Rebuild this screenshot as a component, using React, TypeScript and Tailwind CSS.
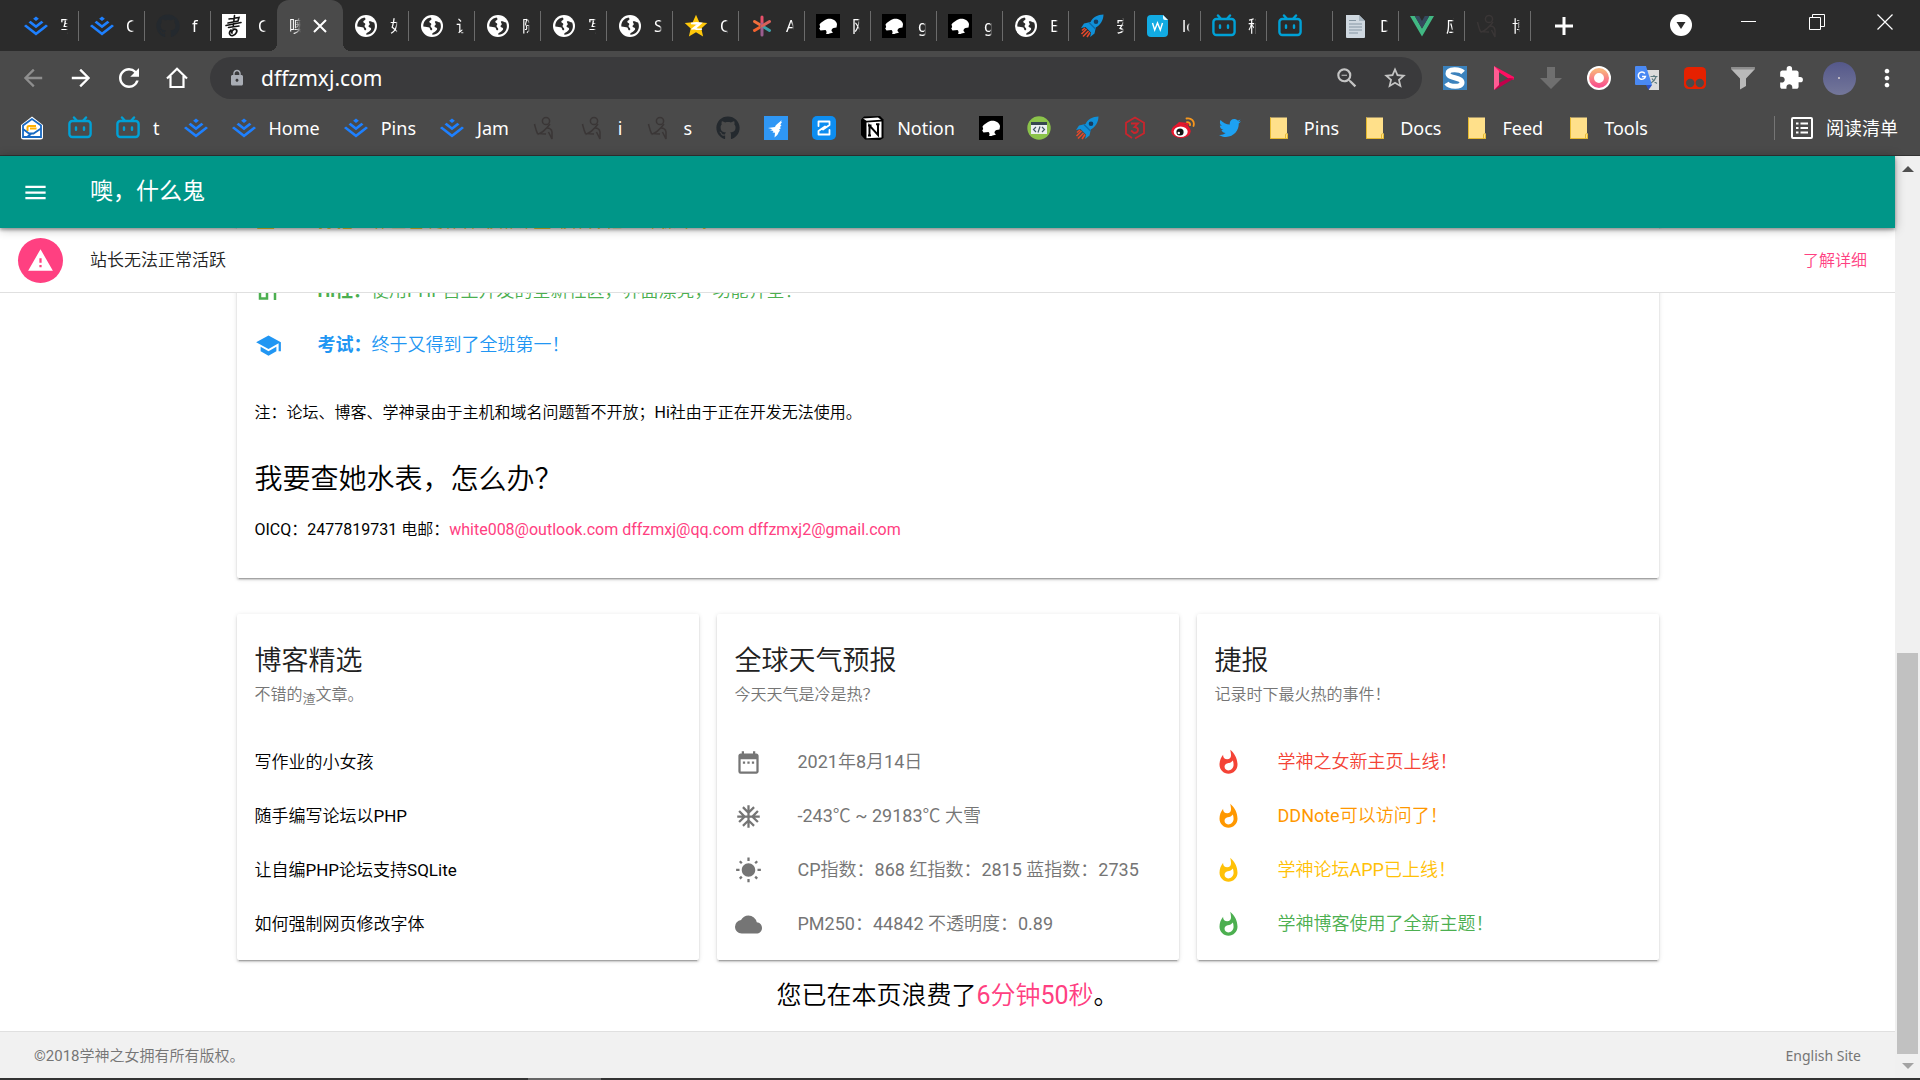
import type { ReactNode } from "react";
import {
  MdAcUnit,
  MdArrowBack,
  MdArrowForward,
  MdCloud,
  MdDateRange,
  MdExtension,
  MdForum,
  MdLock,
  MdMenu,
  MdMoreVert,
  MdRefresh,
  MdSchool,
  MdStarBorder,
  MdWarning,
  MdWbSunny,
  MdWhatshot,
  MdZoomOut,
} from "react-icons/md";
import { FaGithub, FaTwitter } from "react-icons/fa";
import { SiJuejin } from "react-icons/si";

/* ---------- browser icons ---------- */

const Juejin = () => <SiJuejin className="size-6 text-[#1e80ff]" />;

const Bili = () => (
  <svg viewBox="0 0 24 24" className="size-6" fill="none" stroke="#00a1d6" strokeWidth="2.4" strokeLinecap="round">
    <path d="M6 1.5 8.6 4.6M18 1.5 15.4 4.6" />
    <rect x="1.4" y="5" width="21.2" height="16" rx="3" />
    <path d="M8 11.4v2.4M16 11.4v2.4" />
  </svg>
);

const Globe = () => (
  <svg viewBox="0 0 24 24" className="size-6">
    <circle cx="12" cy="12" r="11" fill="#fff" />
    <path
      d="M10.5 3.4c-4.4.8-7.4 4.4-7.2 9 2.6.6 4.8.4 6 1.2.8.6.5 1.8 1.2 2.4.9.7 2 .2 1.7-1.2-.3-1.3-1.6-1.3-1.7-2.7 0-.9 1-1.3.8-2.2-.3-1-1.9-.9-2-2.1-.1-1.3 1.8-1.5 2.2-2.5.2-.6-.3-1.3-1-1.900ZM15 7.200c-.6 1.300.8 1.800.8 2.900 0 1.200-1.500 1.400-1.300 2.500.2 1.100 2.200.7 2.600 2 .3 1.100-.7 1.700-1.600 2.600-1.400 1.400-2.600 1.300-3.300 2.600-.2.400 0 .8.400 1 4.700-.200 8.300-3.900 8.300-8.600 0-1.300-.3-2.500-.8-3.600-1.700-.9-3.600-1.600-5.100-1.400Z"
      fill="#2b2b2b"
    />
  </svg>
);

const Rocket = () => (
  <svg viewBox="0 0 24 24" className="size-6">
    <path d="M23.5.5c-6 .2-10.5 2.600-13 7.500L4 9.500 1 14l4.500-1 5.500 5.500-.8 4.500 4.300-3.500 1.300-6C20.500 11 23.300 6.500 23.500.5Z" fill="#1090d8" />
    <circle cx="16" cy="7.8" r="2.3" fill="#173c5e" />
    <path d="M9 8.500 15.500 15" stroke="#0c6aa8" strokeWidth="1.2" />
    <path d="M6.500 15 1.500 20M8.500 17 3 22.500M5 14l-3 2.500M10 18.500 7 23" stroke="#e2492c" strokeWidth="1.6" />
  </svg>
);

const Horse = () => (
  <svg viewBox="0 0 24 24" className="size-6">
    <path d="M0 0h24v24H0z" fill="#000" />
    <path
      d="M3.500 10.500C5 8 7 7.500 9 6c3-2 6.500-1.500 9 0 1.500 1 3 2.500 3 4.500l-.5 3-3 .5c-1.500.5-2 1.500-2 3l1.500 1.500c-2 1-3 .5-4.500 1.500H10c1-1.500.5-3-.5-4L4.500 16.500l-1.300-2 1-1.500Z"
      fill="#fff"
    />
  </svg>
);

const Star = () => (
  <svg viewBox="0 0 24 24" className="size-6">
    <path d="m12 .8 3.300 7.500 8 .8-6 5.400 1.800 8-7.100-4.200-7.100 4.200 1.800-8-6-5.400 8-.8Z" fill="#ffc80a" />
    <path d="M7 9.500c4-.8 7-.8 10-.2l-6.500 5.500c2.500.6 5 .6 7.500.2M7 9.500c2.500 0 5 .2 7 .8L7.500 15.500" fill="none" stroke="#fff" strokeWidth="1.6" />
  </svg>
);

const Asterisk = () => (
  <svg viewBox="0 0 24 24" className="size-6" strokeWidth="3" strokeLinecap="round">
    <path d="M12 9V3" stroke="#e8506a" />
    <path d="M9.500 10.500 4.500 7.500" stroke="#f26f3c" />
    <path d="m9.500 13.500-5 3" stroke="#f2622f" />
    <path d="M12 10v11" stroke="#9a5d8e" />
    <path d="m13 12.500 6.500 4" stroke="#3f9ea6" />
    <path d="m12 12 7.500-4.500" stroke="#d9605a" />
  </svg>
);

const Stroke = () => (
  <svg viewBox="0 0 24 24" className="size-6" fill="none" stroke="#3a3636" strokeWidth="1.5">
    <circle cx="13" cy="5" r="3.6" />
    <path d="M1.500 8c1 4 1.500 7 3 9.500L13 18M17 8C14 12 9 17 4.500 18.500M14 12c3 0 4.500 1 5 4v7l-3.500-7" />
  </svg>
);

const Calligraphy = () => (
  <svg viewBox="0 0 24 24" className="size-6" fill="none" stroke="#111" strokeLinecap="round">
    <path d="M0 0h24v24H0z" fill="#fff" stroke="none" />
    <path d="M12.500 1.500 11 14M7 5l10-1.500-1 3.500L6 9M4 11.500l15-3M6.500 13.500 17 12" strokeWidth="1.6" />
    <path d="M9 16c-3 3-1 6.500 2 5.500s5-4.500 3-6-5 2-4 3.500" strokeWidth="1.7" />
  </svg>
);

const WDoc = () => (
  <svg viewBox="0 0 24 24" className="size-6">
    <path d="M5 1h12l5 5v13a4 4 0 0 1-4 4H5a4 4 0 0 1-4-4V5a4 4 0 0 1 4-4Z" fill="#12abe3" />
    <path d="m17 1 5 5h-3a2 2 0 0 1-2-2Z" fill="#eafaff" />
    <path d="m6.500 9 2.200 7 2.800-7 2.800 7 2.200-7" fill="none" stroke="#fff" strokeWidth="1.4" />
  </svg>
);

const Paper = () => (
  <svg viewBox="0 0 24 24" className="size-6">
    <path d="M2 1h13l6 6v16a1 1 0 0 1-1 1H3a1 1 0 0 1-1-1Z" fill="#cfd8e0" />
    <path d="m15 1 6 6h-6Z" fill="#a9b7c2" />
    <path d="M5 6.500h7M5 10h13M5 13h13M5 16h13M5 19h9" stroke="#8596a3" strokeWidth="1.1" />
  </svg>
);

const Vue = () => (
  <svg viewBox="0 0 24 24" className="size-6">
    <path d="M0 2h4.800L12 14.500 19.200 2H24L12 22.500Z" fill="#41b883" />
    <path d="M4.800 2h4.400L12 6.900 14.800 2h4.400L12 14.500Z" fill="#35495e" />
  </svg>
);

const Mail = () => (
  <svg viewBox="0 0 24 24" className="size-6">
    <path d="M12 .5 23 9v12a2.500 2.500 0 0 1-2.500 2.500h-17A2.500 2.500 0 0 1 1 21V9Z" fill="#fff" />
    <path d="M12 3 3 9.500V21h18V9.500Z" fill="none" stroke="#1769c2" strokeWidth="1.8" />
    <path d="M7.500 15v-3.500a1.500 1.500 0 0 1 1.500-1.500h7M16.500 12.500h-6.500" fill="none" stroke="#ffb100" strokeWidth="2" />
    <path d="m3 13 6 4.500h4.500l7.500-5M7 21l4-3" fill="none" stroke="#1769c2" strokeWidth="1.8" />
  </svg>
);

const Bird = () => (
  <svg viewBox="0 0 24 24" className="size-6">
    <path d="M0 0h24v24H0z" fill="#2f97f5" />
    <path
      d="M18.500 2.500C17.500 6 12 7.500 11 11L4 12l4.500 1.200-2.500 1 3.500.8-1 1.500 2.500.3-.5 4.700c2-1.500 3.500-3 4-5l1.500-2-1-.8 2-1.700-1.200-.8 1.700-2-1.200-.7 1.700-2.500-1-.5Z"
      fill="#fff"
    />
  </svg>
);

const ZApp = () => (
  <svg viewBox="0 0 24 24" className="size-6" fill="none" stroke="#fff" strokeWidth="1.8" strokeLinejoin="round" strokeLinecap="round">
    <rect width="24" height="24" rx="5" fill="#0d8df0" stroke="none" />
    <path d="M6.500 10V5.500h11v3.500L11 13.500M17.500 14v4.500h-11V15L13 10.500" />
  </svg>
);

const Notion = () => (
  <svg viewBox="0 0 24 24" className="size-6">
    <path d="M1 3.500 4 .5 20 0l3.500 3.500V22L20 24 5 23.500 1 19Z" fill="#000" />
    <path d="m3 2.500 15-1 3 2.200L6.500 4.800ZM6.500 6.500l15-1v16l-15 .8Z" fill="#fff" />
    <path d="M9.500 19.500v-10l8.500 9.500V8M8 9.500h3.500M8 19.500h3M16 8.200h3.500" stroke="#000" strokeWidth="2" fill="none" />
  </svg>
);

const CodeBadge = () => (
  <svg viewBox="0 0 24 24" className="size-6">
    <circle cx="12" cy="12" r="11.7" fill="#8bc34a" />
    <path d="M4 6h16v12H4z" fill="#eceff1" />
    <path d="M4 6h16v3H4z" fill="#37474f" />
    <path d="m9 11-2.500 2.500L9 16m6-5 2.500 2.500L15 16m-2-5.500-2 6" fill="none" stroke="#455a64" strokeWidth="1.2" />
  </svg>
);

const RedHex = () => (
  <svg viewBox="0 0 24 24" className="size-6" fill="none" stroke="#c9252d" strokeWidth="1.8">
    <path d="M9 22 3 17.800V6.700l9-5.200 9 5.200v10.600l-9 5.200" />
    <path d="M8 7.500h7L11.500 11c5 .5 4.500 6-.5 6L8 14.500" />
  </svg>
);

const Weibo = () => (
  <svg viewBox="0 0 24 24" className="size-6">
    <ellipse cx="10" cy="15" rx="9.8" ry="7.2" fill="#e6162d" />
    <path d="M8 6 4 10l10-2 3 2 1-3Z" fill="#e6162d" />
    <ellipse cx="9.7" cy="15.8" rx="7" ry="5.3" fill="#fff" />
    <circle cx="9" cy="16" r="3.6" fill="#111" />
    <circle cx="7.8" cy="17" r="1.2" fill="#fff" />
    <path d="M15.500 2.500c5-1 8.500 3 7 7.500M16 6.200c2-.3 3.500 1 3 3" fill="none" stroke="#f7971d" strokeWidth="1.8" strokeLinecap="round" />
  </svg>
);

const Folder = () => (
  <svg viewBox="-3 -1 24 24" className="size-6">
    <path d="M0 .5h17V16l1 1v4.500H0Z" fill="#ffe08a" />
    <path d="M.5 21.500h15V17.500c0-1 2-1 2 0v4h-2M.5 21.500V.5" fill="none" stroke="#e5b92f" />
  </svg>
);

const ReadingList = () => (
  <svg viewBox="0 0 22 22" className="size-[22px]" fill="none" stroke="#fff" strokeWidth="2">
    <rect x="1" y="1" width="20" height="20" rx="1" />
    <path d="M5 6.500h2.500M9.500 6.500H17M5 11h2.500M9.500 11H17M5 15.500h2.500M9.500 15.500H17" />
  </svg>
);

const Home = () => (
  <svg viewBox="0 0 24 24" className="size-6" fill="none" stroke="#fff" strokeWidth="2.2">
    <path d="M2 12.500 12 2.800l10 9.700M5.500 10v11h13V10" />
  </svg>
);

const extensions: { name: string; icon: ReactNode }[] = [
  {
    name: "S",
    icon: (
      <svg viewBox="0 0 24 24" className="size-6">
        <path d="M0 0h24v24H0z" fill="#3b82bd" />
        <path d="M20 6.500C17 3 5 2.500 5 7.500S19 11 19 16.500 6 21 3.500 17" fill="none" stroke="#fff" strokeWidth="5" />
      </svg>
    ),
  },
  {
    name: "Play",
    icon: (
      <svg viewBox="0 0 24 24" className="size-6">
        <path d="m3 0 20 11v2.500h-4L6 5Z" fill="#ff0f62" />
        <path d="M23 12.500 4 24v-5l14-7Z" fill="#c2004b" />
        <path d="m3 0 5 5v14l-5 5Z" fill="#ff5c93" />
      </svg>
    ),
  },
  {
    name: "Download",
    icon: (
      <svg viewBox="0 0 24 24" className="size-6">
        <path d="M8 1h8v11h7L12 23 1 12h7Z" fill="#6f6f6f" />
      </svg>
    ),
  },
  {
    name: "Ring",
    icon: (
      <svg viewBox="0 0 24 24" className="size-6">
        <defs>
          <linearGradient id="ring" x1="0" y1="0" x2="0" y2="1">
            <stop offset="0" stopColor="#f9b27c" />
            <stop offset="1" stopColor="#f8558c" />
          </linearGradient>
        </defs>
        <circle cx="12" cy="12" r="12" fill="#fff" />
        <circle cx="12" cy="12" r="7.5" fill="none" stroke="url(#ring)" strokeWidth="5" />
      </svg>
    ),
  },
  {
    name: "Translate",
    icon: (
      <svg viewBox="0 0 24 24" className="size-6">
        <path d="M11 4h13v20H14Z" fill="#dcdcdc" />
        <path d="M15.500 10.500h7M19 9v1.500M21 11c-1 3-3 5-5 6M17 12.500c1 2 3 4 5 5" stroke="#5c7a80" strokeWidth="1.2" fill="none" />
        <path d="M11 19h6l-3.500 5Z" fill="#2b50c8" />
        <path d="M1 0h10l6 19H1a1 1 0 0 1-1-1V1a1 1 0 0 1 1-1Z" fill="#4a89f3" />
        <path d="M9.800 7.500a3.600 3.600 0 1 0 .6 3H7" fill="none" stroke="#fff" strokeWidth="1.5" />
      </svg>
    ),
  },
  {
    name: "Monkey",
    icon: (
      <svg viewBox="0 0 24 24" className="size-6">
        <rect x="1" y="1" width="22" height="22" rx="4.5" fill="#e62100" />
        <circle cx="7.2" cy="17" r="4.2" fill="#4a4a4a" />
        <circle cx="16.8" cy="17" r="4.2" fill="#4a4a4a" />
      </svg>
    ),
  },
  {
    name: "Filter",
    icon: (
      <svg viewBox="0 0 24 24" className="size-6">
        <path d="M.5 1h23v2.500l-8.500 9V20l-6 3.500v-11l-8.500-9Z" fill="#b9b9b9" />
        <path d="M.5 1h23v2.500H.5Z" fill="#8d8d8d" />
      </svg>
    ),
  },
  { name: "Extensions", icon: <MdExtension className="size-[26px] text-white" /> },
  {
    name: "Profile",
    icon: (
      <span className="flex size-[33px] items-center justify-center rounded-full bg-linear-to-b from-[#55588a] to-[#74779a]">
        <span className="size-[2px] rounded-full bg-[#d8cfd0]" />
      </span>
    ),
  },
  { name: "Menu", icon: <MdMoreVert className="size-7 text-white" /> },
];

const Hub = () => <FaGithub className="size-6 text-[#24292e]" />;

const tabs: { icon?: ReactNode; text: string; active?: boolean }[] = [
  { icon: <Juejin />, text: "写" },
  { icon: <Juejin />, text: "C" },
  { icon: <Hub />, text: "f" },
  { icon: <Calligraphy />, text: "C" },
  { text: "噢，", active: true },
  { icon: <Globe />, text: "如" },
  { icon: <Globe />, text: "让" },
  { icon: <Globe />, text: "随" },
  { icon: <Globe />, text: "写" },
  { icon: <Globe />, text: "S" },
  { icon: <Star />, text: "Q" },
  { icon: <Asterisk />, text: "A" },
  { icon: <Horse />, text: "网" },
  { icon: <Horse />, text: "g" },
  { icon: <Horse />, text: "g" },
  { icon: <Globe />, text: "E" },
  { icon: <Rocket />, text: "安" },
  { icon: <WDoc />, text: "lo" },
  { icon: <Bili />, text: "稍" },
  { icon: <Bili />, text: "" },
  { icon: <Paper />, text: "D" },
  { icon: <Vue />, text: "应" },
  { icon: <Stroke />, text: "博" },
];

const bookmarks: { icon: ReactNode; text?: string }[] = [
  { icon: <Mail /> },
  { icon: <Bili /> },
  { icon: <Bili />, text: "t" },
  { icon: <Juejin /> },
  { icon: <Juejin />, text: "Home" },
  { icon: <Juejin />, text: "Pins" },
  { icon: <Juejin />, text: "Jam" },
  { icon: <Stroke /> },
  { icon: <Stroke />, text: "i" },
  { icon: <Stroke />, text: "s" },
  { icon: <Hub /> },
  { icon: <Bird /> },
  { icon: <ZApp /> },
  { icon: <Notion />, text: "Notion" },
  { icon: <Horse /> },
  { icon: <CodeBadge /> },
  { icon: <Rocket /> },
  { icon: <RedHex /> },
  { icon: <Weibo /> },
  { icon: <FaTwitter className="size-[22px] text-[#1da1f2]" /> },
  { icon: <Folder />, text: "Pins" },
  { icon: <Folder />, text: "Docs" },
  { icon: <Folder />, text: "Feed" },
  { icon: <Folder />, text: "Tools" },
];

function TabStrip() {
  return (
    <div className="flex h-[51px] bg-[#2b2b2b] pl-[13px]">
      {tabs.map((tab, i) =>
        tab.active ? (
          <div key={i} className="relative flex w-[66px] shrink-0 items-center rounded-t-xl bg-[#4a4a4a] pl-3">
            <span className="absolute right-full bottom-0 size-2 bg-[radial-gradient(circle_at_0_0,#2b2b2b_8px,#4a4a4a_8px)]" />
            <span className="absolute bottom-0 left-full size-2 bg-[radial-gradient(circle_at_100%_0,#2b2b2b_8px,#4a4a4a_8px)]" />
            <span className="w-3 overflow-hidden mask-r-from-50% text-base whitespace-nowrap">{tab.text}</span>
            <button aria-label="Close tab" className="ml-3">
              <svg viewBox="0 0 14 14" className="size-[14px]" stroke="#fff" strokeWidth="2">
                <path d="m1 1 12 12M13 1 1 13" />
              </svg>
            </button>
          </div>
        ) : (
          <div key={i} className="flex w-[66px] shrink-0 items-center pl-[11px]">
            {tab.icon}
            <span className="ml-3 w-2 overflow-hidden mask-r-from-70% text-base whitespace-nowrap">{tab.text}</span>
            <span className={i === 3 ? "hidden" : "ml-auto h-[30px] w-px bg-[#6b6b6b]"} />
          </div>
        ),
      )}
      <button aria-label="New tab" className="ml-6 self-center">
        <svg viewBox="0 0 18 18" className="size-[18px]" stroke="#fff" strokeWidth="3">
          <path d="M9 0v18M0 9h18" />
        </svg>
      </button>
      <div className="ml-auto flex gap-[49px] pr-[27px] text-white">
        <button aria-label="Search tabs" className="mt-[14px] size-[22px]">
          <svg viewBox="0 0 22 22" className="size-[22px]">
            <circle cx="11" cy="11" r="11" fill="#fff" />
            <path d="M6.500 8h9L11 15Z" fill="#2b2b2b" />
          </svg>
        </button>
        <div className="flex h-[43px] items-center gap-[52px]">
          <button aria-label="Minimize">
            <svg viewBox="0 0 16 16" className="size-4" stroke="#fff">
              <path d="M0 7.500h15" />
            </svg>
          </button>
          <button aria-label="Restore">
            <svg viewBox="0 0 16 16" className="size-4" stroke="#fff" fill="none">
              <path d="M.5 3.500h11v12H.5zM3.500 3.500v-3h12v12h-4" />
            </svg>
          </button>
          <button aria-label="Close">
            <svg viewBox="0 0 16 16" className="size-4" stroke="#fff" strokeWidth="1.2">
              <path d="m.5.5 15 15M15.500.5l-15 15" />
            </svg>
          </button>
        </div>
      </div>
    </div>
  );
}

function Toolbar() {
  return (
    <div className="flex h-[54px] items-center">
      <nav className="flex gap-6 pl-[21px]">
        <button aria-label="Back">
          <MdArrowBack className="size-6 scale-115 text-[#8e8e8e]" />
        </button>
        <button aria-label="Forward">
          <MdArrowForward className="size-6 scale-115 text-white" />
        </button>
        <button aria-label="Reload">
          <MdRefresh className="size-6 scale-125 text-white" />
        </button>
        <button aria-label="Home">
          <Home />
        </button>
      </nav>
      <div className="ml-[21px] flex h-[42px] flex-1 items-center rounded-full bg-[#3a3a3c] pr-[14px] pl-[18px]">
        <MdLock className="size-[18px] text-[#a9adb5]" />
        <input
          aria-label="Address"
          defaultValue="dffzmxj.com"
          className="ml-[15px] h-8 flex-1 bg-transparent text-[21px] text-white outline-none"
        />
        <MdZoomOut className="size-[26px] text-[#c4c4c4]" />
        <MdStarBorder className="ml-[22px] size-[26px] text-[#c4c4c4]" />
      </div>
      <div className="ml-[9px] flex pr-[9px]">
        {extensions.map((e) => (
          <button key={e.name} aria-label={e.name} className="flex w-12 items-center justify-center">
            {e.icon}
          </button>
        ))}
      </div>
    </div>
  );
}

function BookmarkBar() {
  return (
    <div className="flex h-[51px] items-center border-b border-[#333] pr-[22px] pb-[5px] pl-5 text-lg">
      <div className="flex gap-6">
        {bookmarks.map((b, i) => (
          <a key={i} href="#" className="flex min-w-6 shrink-0 items-center gap-[13px]">
            {b.icon}
            {b.text}
          </a>
        ))}
      </div>
      <span className="ml-auto h-6 w-px bg-[#757575]" />
      <button className="ml-4 flex items-center gap-[13px]">
        <ReadingList />
        阅读清单
      </button>
    </div>
  );
}

/* ---------- page ---------- */

const cardShadow =
  "rounded-[2px] bg-white shadow-[0_2px_2px_0_rgba(0,0,0,.14),0_3px_1px_-2px_rgba(0,0,0,.2),0_1px_5px_0_rgba(0,0,0,.12)]";

const Community = () => (
  <svg viewBox="0 0 27 27" className="size-[27px]" fill="none" stroke="currentColor" strokeWidth="2.5">
    <path d="M5 5h7v15.500H5zM20 5v17M15 6h6" />
  </svg>
);

function Row({ icon, color, children }: { icon?: ReactNode; color: string; children: ReactNode }) {
  return (
    <li className={`flex h-[54px] items-center gap-9 ${color}`}>
      {icon}
      <span>{children}</span>
    </li>
  );
}

function Card({ title, sub, children }: { title: string; sub: ReactNode; children: ReactNode }) {
  return (
    <section className={`${cardShadow} px-[18px] pt-[29px] pb-[9px]`}>
      <h2 className="text-[27px] leading-9 text-[#212121]">{title}</h2>
      <p className="h-14 pt-1 text-base leading-6 text-[#757575]">{sub}</p>
      <ul className="text-lg">{children}</ul>
    </section>
  );
}

const posts = ["写作业的小女孩", "随手编写论坛以PHP", "让自编PHP论坛支持SQLite", "如何强制网页修改字体"];

const weather = [
  { icon: <MdDateRange className="size-[27px]" />, text: "2021年8月14日" },
  { icon: <MdAcUnit className="size-[27px]" />, text: "-243℃ ~ 29183℃ 大雪" },
  { icon: <MdWbSunny className="size-[27px]" />, text: "CP指数：868 红指数：2815 蓝指数：2735" },
  { icon: <MdCloud className="size-[27px]" />, text: "PM250：44842 不透明度：0.89" },
];

const news = [
  { text: "学神之女新主页上线！", color: "text-[#f44336]" },
  { text: "DDNote可以访问了！", color: "text-[#ff9800]" },
  { text: "学神论坛APP已上线！", color: "text-[#ffc107]" },
  { text: "学神博客使用了全新主题！", color: "text-[#4caf50]" },
];

function Site() {
  return (
    <div className="flex min-w-0 flex-1 flex-col font-['Roboto','Noto_Sans_CJK_SC_DemiLight','Noto_Sans_CJK_SC_Light','Noto_Sans_CJK_SC',sans-serif] text-black">
      <header className="relative z-20 flex h-[72px] shrink-0 items-center bg-[#009688] pl-[22px] text-white shadow-[0_2px_3px_0_rgba(0,0,0,.3),0_1px_10px_0_rgba(0,0,0,.3)]">
        <button aria-label="Menu">
          <MdMenu className="size-[27px]" />
        </button>
        <h1 className="ml-[41px] font-['Roboto','Noto_Sans_CJK_SC',sans-serif] text-[23px]">噢，什么鬼</h1>
      </header>

      <div className="relative flex min-h-0 flex-1 flex-col overflow-hidden">
        <div className="absolute inset-x-0 top-px z-10 flex h-16 items-center border-b border-[#e0e0e0] bg-white pr-7 pl-[18px]">
          <span className="flex size-[45px] items-center justify-center rounded-full bg-[#ff4081] text-white">
            <MdWarning className="size-[27px]" />
          </span>
          <p className="ml-[27px] text-[17px] text-[#212121]">站长无法正常活跃</p>
          <button className="ml-auto text-base text-[#ff4081]">了解详细</button>
        </div>

        <main className="mx-auto w-full max-w-[1458px] px-[18px]">
          <section className={`${cardShadow} -mt-[18px] h-[368px] px-[18px]`}>
            <ul className="text-lg">
              <Row color="text-[#fdd835]" icon={<MdForum className="size-[27px]" />}>
                <b className="font-['Roboto','Noto_Sans_CJK_SC',sans-serif]">论坛：</b>
                使用最新的技术搭建而成的论坛，功能齐全！
              </Row>
              <Row color="text-[#4caf50]" icon={<Community />}>
                <b className="font-['Roboto','Noto_Sans_CJK_SC',sans-serif]">Hi社：</b>
                使用PHP自主开发的全新社区，界面漂亮，功能齐全！
              </Row>
              <Row color="text-[#2196f3]" icon={<MdSchool className="size-[27px]" />}>
                <b className="font-['Roboto','Noto_Sans_CJK_SC',sans-serif]">考试：</b>
                终于又得到了全班第一！
              </Row>
            </ul>
            <p className="mt-[27px] text-base leading-[27px]">
              注：论坛、博客、学神录由于主机和域名问题暂不开放；Hi社由于正在开发无法使用。
            </p>
            <h2 className="mt-[27px] text-[28px] leading-[54px]">我要查她水表，怎么办？</h2>
            <p className="mt-[9px] text-base leading-[27px]">
              OICQ：2477819731 电邮：
              <span className="text-[#ff4081]">
                <a href="#">white008@outlook.com</a> <a href="#">dffzmxj@qq.com</a> <a href="#">dffzmxj2@gmail.com</a>
              </span>
            </p>
          </section>

          <div className="mt-9 grid grid-cols-3 gap-[18px]">
            <Card
              title="博客精选"
              sub={
                <>
                  不错的<sub className="text-[13px]">渣</sub>文章。
                </>
              }
            >
              {posts.map((p) => (
                <Row key={p} color="text-[17px] text-black">
                  <a href="#">{p}</a>
                </Row>
              ))}
            </Card>
            <Card title="全球天气预报" sub="今天天气是冷是热？">
              {weather.map((w) => (
                <Row key={w.text} color="text-[#757575]" icon={w.icon}>
                  {w.text}
                </Row>
              ))}
            </Card>
            <Card title="捷报" sub="记录时下最火热的事件！">
              {news.map((n) => (
                <Row key={n.text} color={n.color} icon={<MdWhatshot className="size-[27px]" />}>
                  {n.text}
                </Row>
              ))}
            </Card>
          </div>

          <p className="mt-[18px] text-center text-[25px] leading-9">
            您已在本页浪费了<span className="text-[#ff4081]">6分钟50秒</span>。
          </p>
        </main>

        <footer className="mt-auto flex h-[47px] shrink-0 items-center justify-between border-t border-[#e0e0e0] bg-[#f1f1f1] px-[34px] pt-[2px] text-[#757575]">
          <span className="text-[15px]">©2018学神之女拥有所有版权。</span>
          <a href="#" className="font-['Noto_Sans',sans-serif] text-sm">
            English Site
          </a>
        </footer>
      </div>
    </div>
  );
}

function Scrollbar() {
  return (
    <div className="flex w-[25px] flex-col items-center bg-[#f0f0f0] py-[9px]">
      <svg viewBox="0 0 12 8" className="h-2 w-3">
        <path d="m6 1 6 6H0Z" fill="#505050" />
      </svg>
      <div className="flex-1" />
      <div className="mb-[9px] h-[401px] w-[21px] bg-[#c1c1c1]" />
      <svg viewBox="0 0 12 6" className="h-[6px] w-3">
        <path d="M0 0h12L6 6Z" fill="#a3a3a3" />
      </svg>
    </div>
  );
}

export default function App() {
  return (
    <div className="flex h-screen flex-col overflow-hidden bg-white">
      <div className="shrink-0 bg-[#4a4a4a] font-['Noto_Sans','Noto_Sans_CJK_SC',sans-serif] text-white">
        <TabStrip />
        <Toolbar />
        <BookmarkBar />
      </div>
      <div className="flex min-h-0 flex-1">
        <Site />
        <Scrollbar />
      </div>
      <div className="flex h-[2px] shrink-0 bg-[#333]">
        <span className="ml-[27.5%] w-[73px] bg-[#666]" />
      </div>
    </div>
  );
}
